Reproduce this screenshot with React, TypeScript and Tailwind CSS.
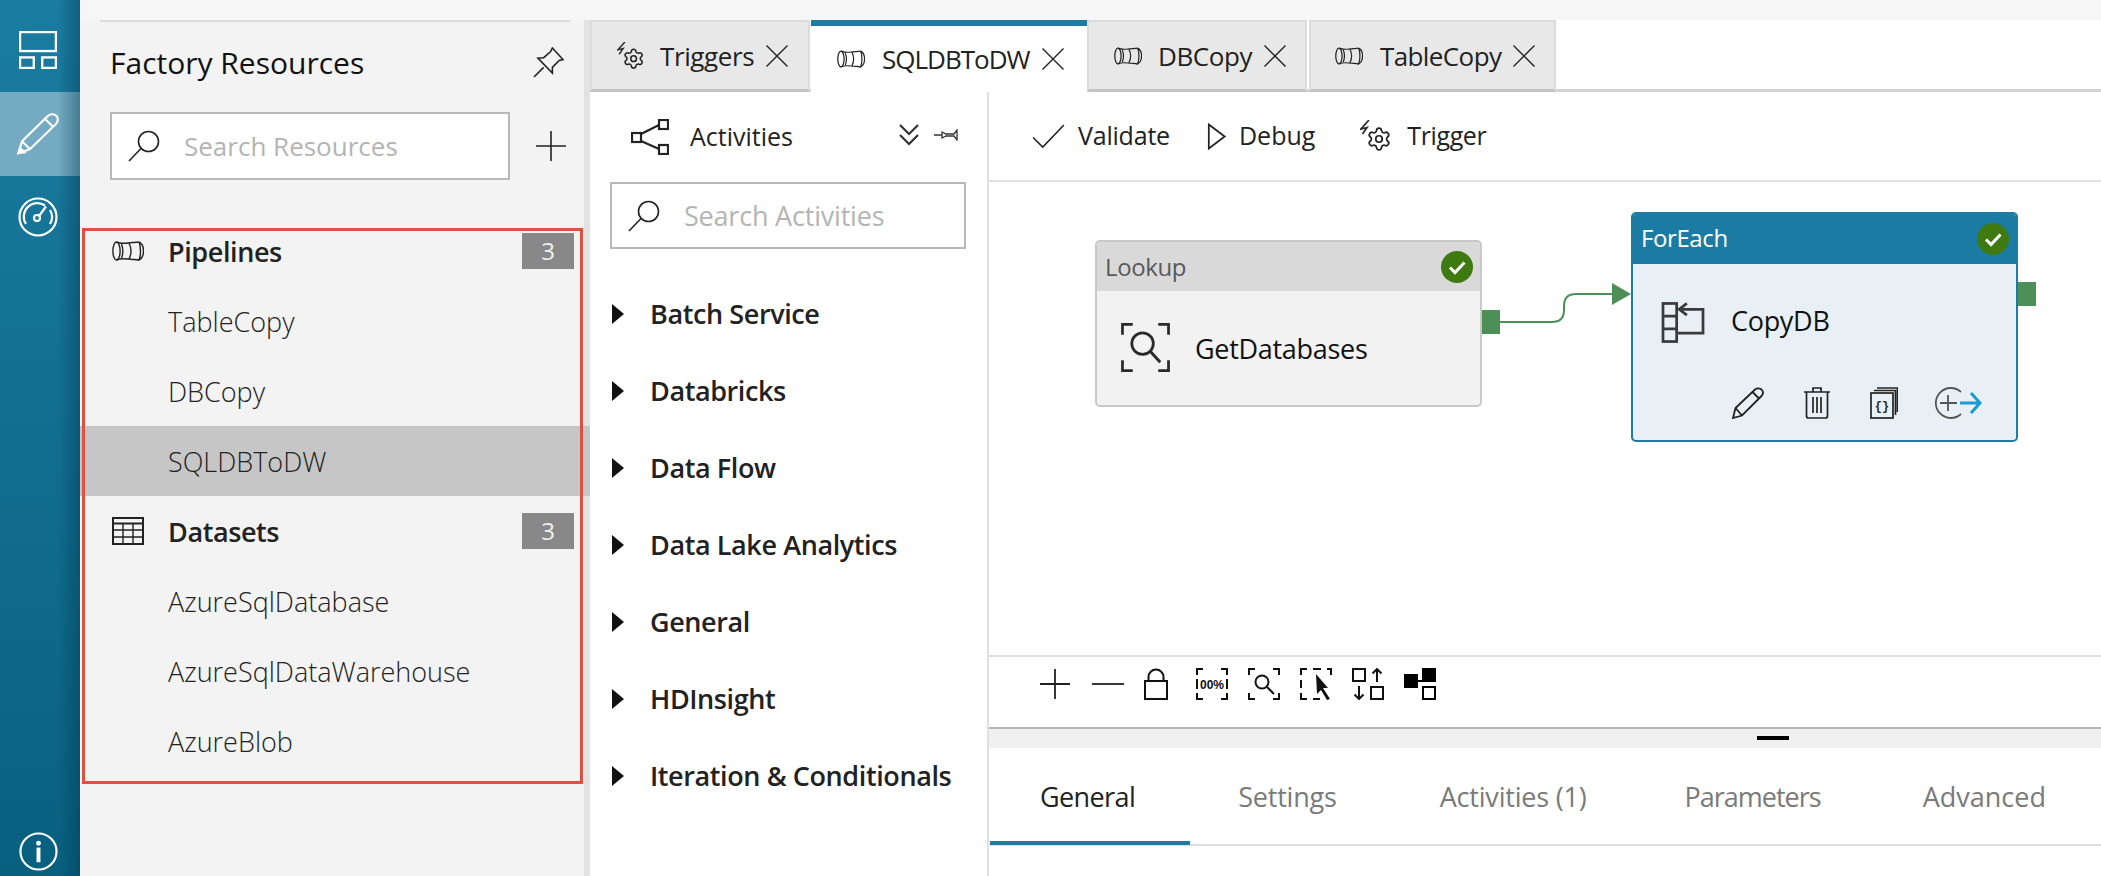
import {Settings} from 'lucide-react';

const PipelineIcon = ({className = ''}: {className?: string}) => (
	<svg viewBox="0 0 32 20" className={className} fill="none" stroke="currentColor" strokeWidth="1.4">
		<ellipse cx="4.5" cy="10" rx="3.6" ry="9" />
		<path d="M4.5 1 C8 2.5 12 2.5 16 2 C20 1.5 24 1.5 27 1" />
		<path d="M4.5 19 C8 17.5 12 17.5 16 18 C20 18.500 24 18.500 27 19" />
		<path d="M9.500 3 C11 7 11 13 9.500 17" />
		<path d="M17 2 C19.500 7 19.500 13 17 18" />
		<path d="M27 1 C33 4 33 16 27 19 C29 14 29 6 27 1" />
	</svg>
);

const SearchIcon = ({className = ''}: {className?: string}) => (
	<svg viewBox="0 0 32 32" className={className} fill="none" stroke="#222" strokeWidth="1.6">
		<circle cx="20.500" cy="11.500" r="10" />
		<path d="M13 18.500 L1 31" />
	</svg>
);

const PinIcon = ({className = ''}: {className?: string}) => (
	<svg viewBox="0 0 32 32" className={className} fill="none" stroke="#222" strokeWidth="1.6" strokeLinejoin="miter">
		<path d="M20 1 L31 13 L27 14 L20 21 L20 27 L5 11.500 L11 11 L18 5 Z" />
		<path d="M11 21 L1 31" />
	</svg>
);

const TriggerIcon = ({className = ''}: {className?: string}) => (
	<svg viewBox="0 0 32 32" className={className} fill="none" stroke="#2a2a2a" strokeWidth="1.700">
		<path d="M9 0 L1 9 L7 7.500 L2.500 14" />
		<Settings x={6} y={6} width={26} height={26} strokeWidth={1.6} />
	</svg>
);

const CloseX = ({className = ''}: {className?: string}) => (
	<svg viewBox="0 0 22 22" className={className} fill="none" stroke="#222" strokeWidth="1.400">
		<path d="M0.500 0.500 L21.500 21.500 M21.500 0.500 L0.500 21.500" />
	</svg>
);

const CheckBadge = ({className = ''}: {className?: string}) => (
	<svg viewBox="0 0 32 32" className={className}>
		<circle cx="16" cy="16" r="16" fill="#3f7a10" />
		<path d="M9 16.500 L14 21.500 L23.500 11.500" fill="none" stroke="#fff" strokeWidth="3" />
	</svg>
);

const Triangle = () => (
	<svg viewBox="0 0 12 20" className="w-[12px] h-[20px] mr-[26px]">
		<path d="M0 0 L12 10 L0 20 Z" fill="#111" />
	</svg>
);

const categories = ['Batch Service','Databricks','Data Flow','Data Lake Analytics','General','HDInsight','Iteration & Conditionals'];

const App = () => {
	return (
		<div className="w-[2101px] h-[876px] flex overflow-hidden bg-white text-[#222] font-['Open_Sans','Noto_Sans',sans-serif]">
			{/* left nav */}
			<div className="relative w-[80px] h-full flex flex-col bg-gradient-to-b from-[#1a7ca1] to-[#08607f]">
				<div className="h-[92px] flex items-center justify-center pr-[5px]">
					<svg viewBox="0 0 36 36" className="w-[38px] h-[38px] mt-[8px]" fill="none" stroke="#fff" strokeWidth="2.200">
						<rect x="1" y="1" width="34" height="18" />
						<rect x="1" y="25" width="13" height="10" />
						<rect x="22" y="25" width="13" height="10" />
					</svg>
				</div>
				<div className="h-[84px] flex items-center justify-center pr-[5px] bg-[#74abc3]">
					<svg viewBox="0 0 42 46" preserveAspectRatio="none" className="w-[42px] h-[42px]" fill="none" stroke="#fff" strokeWidth="2.200">
						<path d="M1.500 44 L5 31 L31 3 C34 0.500 38 1 40 4 C41.500 7 41 9.500 39 12 L13 39.500 Z" />
						<path d="M5 31 L13 39.500 M28 6.500 L36 15" />
						<path d="M1.500 44 L3 38.500 L7.500 43 Z" fill="#fff" />
					</svg>
				</div>
				<div className="h-[82px] flex items-center justify-center pr-[5px]">
					<svg viewBox="0 0 40 40" className="w-[40px] h-[40px]" fill="none" stroke="#fff" strokeWidth="2.200">
						<circle cx="20" cy="20" r="18.500" />
						<path d="M8 27 A13.500 13.500 0 0 1 27 8.500 M32 13 A13.500 13.500 0 0 1 32 27" />
						<circle cx="19" cy="21" r="3" />
						<path d="M21 19 L28 9.500" />
					</svg>
				</div>
				<div className="mt-auto h-[43px] mb-[1px] flex items-start justify-center pr-[4px]">
					<svg viewBox="0 0 40 40" className="w-[39px] h-[39px]" fill="none" stroke="#fff" strokeWidth="2.200">
						<circle cx="20" cy="20" r="18.500" />
						<circle cx="20" cy="11.500" r="2.500" fill="#fff" stroke="none" />
						<rect x="18" y="16" width="4" height="15" fill="#fff" stroke="none" />
					</svg>
				</div>
				<div className="absolute top-0 right-0 w-[22px] h-full bg-gradient-to-r from-transparent to-[#00354d]/40" />
			</div>

			<div className="flex-1 flex flex-col">
				<div className="h-[20px] bg-[#f6f6f6]" />
				<div className="flex-1 flex">
					{/* factory resources */}
					<div className="relative w-[510px] h-[856px] bg-[#f3f3f3] border-r-[6px] border-[#e2e2e2]">
						<div className="h-[2px] ml-[20px] w-[470px] bg-[#dcdcdc]" />
						<div className="h-[80px] flex items-center pl-[30px]">
							<span className="text-[30px] text-[#111]">Factory Resources</span>
							<PinIcon className="ml-auto mr-[20px] w-[31px] h-[31px]" />
						</div>
						<div className="mt-[10px] flex items-center pl-[30px]">
							<div className="w-[400px] h-[68px] bg-white border-2 border-[#b8b8b8] flex items-center pl-[16px]">
								<SearchIcon className="w-[32px] h-[32px]" />
								<span className="ml-[24px] text-[26px] text-[#b4b4b4]">Search Resources</span>
							</div>
							<svg viewBox="0 0 30 30" className="ml-[26px] w-[30px] h-[30px]" stroke="#222" strokeWidth="1.600">
								<path d="M0 15 H30 M15 0 V30" />
							</svg>
						</div>
						<div className="mt-[36px] flex flex-col">
							<div className="h-[70px] flex items-center pl-[32px] pr-[10px]">
								<PipelineIcon className="w-[32px] h-[20px]" />
								<span className="ml-[24px] mt-[2px] text-[27px] font-semibold tracking-[-0.4px]">Pipelines</span>
								<span className="ml-auto w-[52px] h-[36px] bg-[#888888] text-[#f0f0f0] text-[24px] flex items-center justify-center">3</span>
							</div>
							<div className="h-[70px] flex items-center pl-[88px] pt-[2px] text-[27px] font-light text-[#222]">TableCopy</div>
							<div className="h-[70px] flex items-center pl-[88px] pt-[2px] text-[27px] font-light text-[#222]">DBCopy</div>
							<div className="h-[70px] mr-[-6px] flex items-center pl-[88px] pt-[2px] text-[27px] font-light text-[#222] bg-[#c6c6c6]">SQLDBToDW</div>
							<div className="h-[70px] flex items-center pl-[32px] pr-[10px]">
								<svg viewBox="0 0 32 28" className="w-[32px] h-[28px]" fill="none" stroke="#222" strokeWidth="1.400">
									<rect x="1" y="1" width="30" height="26" strokeWidth="2" />
									<path d="M1 6.500 H31" strokeWidth="2" />
									<path d="M1 13 H31 M1 20 H31 M11 6.500 V27 M21 6.500 V27" />
								</svg>
								<span className="ml-[24px] mt-[2px] text-[27px] font-semibold tracking-[-0.4px]">Datasets</span>
								<span className="ml-auto w-[52px] h-[36px] bg-[#888888] text-[#f0f0f0] text-[24px] flex items-center justify-center">3</span>
							</div>
							<div className="h-[70px] flex items-center pl-[88px] pt-[2px] text-[27px] font-light text-[#222]">AzureSqlDatabase</div>
							<div className="h-[70px] flex items-center pl-[88px] pt-[2px] text-[27px] font-light text-[#222]">AzureSqlDataWarehouse</div>
							<div className="h-[70px] flex items-center pl-[88px] pt-[2px] text-[27px] font-light text-[#222]">AzureBlob</div>
						</div>
						<div className="absolute left-[2px] top-[208px] w-[501px] h-[556px] border-[3px] border-[#e04f3f]" />
					</div>

					{/* editor */}
					<div className="flex-1 flex flex-col">
						<div className="h-[72px] flex border-b-[3px] border-[#d4d4d4]">
							<div className="w-[220px] h-[72px] bg-[#e8e8e8] border-2 border-[#dcdcdc] border-b-[3px] border-b-[#c4c4c4] flex items-center pl-[25px] pt-[1px]">
								<TriggerIcon className="w-[28px] h-[28px]" />
								<span className="ml-[15px] text-[26px] tracking-[-0.4px]">Triggers</span>
								<CloseX className="ml-[12px] w-[22px] h-[22px]" />
							</div>
							<div className="ml-[1px] w-[276px] h-[72px] bg-white border-t-[6px] border-[#1f7ba0] flex items-center pl-[26px]">
								<PipelineIcon className="w-[28px] h-[18px]" />
								<span className="ml-[17px] text-[26px] tracking-[-1px]">SQLDBToDW</span>
								<CloseX className="ml-[12px] w-[22px] h-[22px]" />
							</div>
							<div className="w-[220px] h-[72px] bg-[#e8e8e8] border-2 border-[#dcdcdc] border-b-[3px] border-b-[#c4c4c4] flex items-center pl-[25px] pt-[1px]">
								<PipelineIcon className="w-[28px] h-[18px]" />
								<span className="ml-[16px] text-[26px] tracking-[-0.4px]">DBCopy</span>
								<CloseX className="ml-[12px] w-[22px] h-[22px]" />
							</div>
							<div className="ml-[2px] w-[247px] h-[72px] bg-[#e8e8e8] border-2 border-[#dcdcdc] border-b-[3px] border-b-[#c4c4c4] flex items-center pl-[24px] pt-[1px]">
								<PipelineIcon className="w-[28px] h-[18px]" />
								<span className="ml-[17px] text-[26px] tracking-[-0.6px]">TableCopy</span>
								<CloseX className="ml-[12px] w-[22px] h-[22px]" />
							</div>
						</div>

						<div className="flex-1 flex">
							{/* activities */}
							<div className="w-[399px] border-r-2 border-[#e0e0e0]">
								<div className="h-[90px] flex items-center pl-[41px]">
									<svg viewBox="0 0 38 36" className="w-[38px] h-[36px]" fill="none" stroke="#222" strokeWidth="2.200">
										<rect x="1" y="14" width="9" height="9" />
										<rect x="28" y="1" width="9" height="9" />
										<rect x="28" y="26" width="9" height="9" />
										<path d="M10 15 L28 6 M10 22 L28 30" />
									</svg>
									<span className="ml-[21px] text-[25px]">Activities</span>
									<svg viewBox="0 0 20 22" className="ml-[106px] w-[20px] h-[22px] mt-[-4px]" fill="none" stroke="#333" strokeWidth="2.200">
										<path d="M1 1 L10 10 L19 1 M1 11 L10 20 L19 11" />
									</svg>
									<svg viewBox="0 0 24 12" className="ml-[15px] w-[24px] h-[12px] mt-[-4px]" fill="none" stroke="#333" strokeWidth="1.300">
										<path d="M0 6 H8 M8 3 L12 5 H20 L23 1 V11 L20 7 H12 L8 9 Z" />
									</svg>
								</div>
								<div className="ml-[20px] w-[356px] h-[67px] border-2 border-[#b8b8b8] flex items-center pl-[16px]">
									<SearchIcon className="w-[32px] h-[32px]" />
									<span className="ml-[24px] mt-[1px] text-[27px] tracking-[-0.2px] text-[#b4b4b4]">Search Activities</span>
								</div>
								<div className="mt-[26px] flex flex-col">
									{categories.map(name => (
										<div key={name} className="h-[77px] flex items-center pl-[22px]">
											<Triangle />
											<span className="mt-[2px] text-[27px] font-semibold tracking-[-0.4px] whitespace-nowrap">{name}</span>
										</div>
									))}
								</div>
							</div>

							{/* canvas column */}
							<div className="flex-1 flex flex-col">
								<div className="h-[90px] flex items-center border-b-2 border-[#e0e0e0] pl-[43px]">
									<svg viewBox="0 0 34 26" className="w-[33px] h-[25px]" fill="none" stroke="#222" strokeWidth="1.600">
										<path d="M1 14 L11 24 L33 1" />
									</svg>
									<span className="ml-[13px] text-[25px] tracking-[-0.2px]">Validate</span>
									<svg viewBox="0 0 20 28" className="ml-[37px] w-[20px] h-[27px]" fill="none" stroke="#222" strokeWidth="1.800">
										<path d="M1.500 1.500 L18 14 L1.500 26.500 Z" />
									</svg>
									<span className="ml-[12px] text-[25px]">Debug</span>
									<TriggerIcon className="ml-[45px] w-[32px] h-[32px]" />
									<span className="ml-[15px] text-[25px] tracking-[-0.4px]">Trigger</span>
								</div>

								<div className="relative h-[473px]">
									<svg className="absolute left-0 top-0 w-full h-full" fill="none">
										<path d="M511 140 H563 Q575 140 575 128 V124 Q575 112 587 112 H625" stroke="#4d8f57" strokeWidth="2" />
										<path d="M623 101 L642 112 L623 123 Z" fill="#4d8f57" />
									</svg>
									<div className="absolute left-[106px] top-[58px] w-[387px] h-[167px] rounded-[5px] border-2 border-[#c8c8c8] bg-[#f2f2f2] overflow-hidden">
										<div className="h-[49px] bg-[#d9d9d9] flex items-center pl-[8px] pr-[7px]">
											<span className="text-[24px] text-[#5a5a5a] tracking-[-0.4px]">Lookup</span>
											<CheckBadge className="ml-auto w-[32px] h-[32px]" />
										</div>
										<div className="flex items-center pl-[24px] pt-[32px]">
											<svg viewBox="0 0 50 50" className="w-[49px] h-[49px]" fill="none" stroke="#2a2a2a" strokeWidth="2.800">
												<path d="M12 1.500 H1.500 V12 M38 1.500 H48.500 V12 M1.500 38 V48.500 H12 M38 48.500 H48.500 V38" />
												<circle cx="22" cy="21" r="11" />
												<path d="M30 29 L40 40" strokeWidth="3" />
											</svg>
											<span className="ml-[25px] mt-[4px] text-[27px] text-[#111] tracking-[-0.3px]">GetDatabases</span>
										</div>
									</div>
									<div className="absolute left-[493px] top-[128px] w-[18px] h-[24px] bg-[#4d9057]" />

									<div className="absolute left-[642px] top-[30px] w-[387px] h-[230px] rounded-[5px] border-2 border-[#1f7ba0] bg-[#e8f0f5] overflow-hidden">
										<div className="h-[50px] bg-[#1c7ba2] flex items-center pl-[8px] pr-[7px]">
											<span className="text-[24px] text-white tracking-[-0.4px] mt-[-2px]">ForEach</span>
											<CheckBadge className="ml-auto w-[32px] h-[32px]" />
										</div>
										<div className="flex items-center pl-[28px] pt-[38px]">
											<svg viewBox="0 0 44 42" className="w-[44px] h-[41px]" fill="none" stroke="#3a3a3a" strokeWidth="2.800">
												<rect x="1.500" y="1.500" width="14" height="39" />
												<path d="M1.500 14.500 H15.500 M1.500 27.500 H15.500" />
												<path d="M15.500 32 H42.500 V7.500 H20" />
												<path d="M26 1.500 L18 7.500 L26 13.500" />
											</svg>
											<span className="ml-[26px] mt-[-3px] text-[27px] text-[#111] tracking-[-0.3px]">CopyDB</span>
										</div>
										<div className="mt-[44px] flex items-center pl-[99px]">
											<svg viewBox="0 0 32 32" className="w-[32px] h-[32px]" fill="none" stroke="#222" strokeWidth="1.800">
												<path d="M1 31 L3.500 21 L23 2.500 C25 1 28 1 30 3 C31.500 5 31 7.500 29.500 9 L10 28.500 Z" />
												<path d="M3.500 21 L10 28.500 M20.500 5 L27 11.500" />
											</svg>
											<svg viewBox="0 0 26 32" className="ml-[40px] w-[26px] h-[32px]" fill="none" stroke="#222" strokeWidth="1.700">
												<path d="M0 5 H26 M9 5 V1 H17 V5 M2.500 5 V29 Q2.500 31 4.500 31 H21.500 Q23.500 31 23.500 29 V5" />
												<path d="M9 10 V26 M13 10 V26 M17 10 V26" />
											</svg>
											<svg viewBox="0 0 28 32" className="ml-[40px] w-[28px] h-[32px]" fill="none" stroke="#222" strokeWidth="1.700">
												<rect x="1" y="6" width="22" height="25" />
												<path d="M4 3.500 H25.500 V28 M7 1 H27.500 V25" />
												<text x="12" y="23" fontSize="12" fontWeight="700" fill="#222" stroke="none" textAnchor="middle" fontFamily="Liberation Mono">{'{}'}</text>
											</svg>
											<svg viewBox="0 0 50 32" className="ml-[34px] w-[50px] h-[32px]" fill="none" strokeWidth="1.800">
												<path d="M29 27 A15 15 0 1 1 29 5" stroke="#555" />
												<path d="M8 16 H25 M16 8 V24" stroke="#555" />
												<path d="M28 16 H47 M39 6 L48 16 L39 26" stroke="#1a9ad0" strokeWidth="3" />
											</svg>
										</div>
									</div>
									<div className="absolute left-[1029px] top-[100px] w-[18px] h-[24px] bg-[#4d9057]" />
								</div>

								<div className="h-[72px] border-t-2 border-[#dedede] flex items-center pl-[51px] pb-[16px]">
									<svg viewBox="0 0 30 30" className="w-[30px] h-[30px]" stroke="#222" strokeWidth="1.800"><path d="M0 15 H30 M15 0 V30" /></svg>
									<svg viewBox="0 0 32 30" className="ml-[22px] w-[32px] h-[30px]" stroke="#222" strokeWidth="1.800"><path d="M0 15 H32" /></svg>
									<svg viewBox="0 0 24 32" className="ml-[20px] w-[24px] h-[32px]" fill="none" stroke="#111" strokeWidth="2"><rect x="1" y="13" width="22" height="18" /><path d="M4.500 13 V9 A7.500 7.500 0 0 1 19.500 9 V13" /></svg>
									<svg viewBox="0 0 32 32" className="ml-[28px] w-[32px] h-[32px]" fill="none" stroke="#111" strokeWidth="2">
										<path d="M7 1 H1 V7 M25 1 H31 V7 M1 25 V31 H7 M25 31 H31 V25 M1 11 V21 M31 11 V21" />
										<text x="16" y="20.500" fontSize="12" fontWeight="700" fill="#111" stroke="none" textAnchor="middle" fontFamily="Liberation Sans">00%</text>
									</svg>
									<svg viewBox="0 0 32 32" className="ml-[20px] w-[32px] h-[32px]" fill="none" stroke="#111" strokeWidth="2">
										<path d="M7 1 H1 V7 M25 1 H31 V7 M1 25 V31 H7 M25 31 H31 V25" />
										<circle cx="14" cy="14" r="6.500" />
										<path d="M19 19 L26 26" />
									</svg>
									<svg viewBox="0 0 32 32" className="ml-[20px] w-[32px] h-[32px]" fill="none" stroke="#111" strokeWidth="2">
										<path d="M7 1 H1 V7 M13 1 H21 M27 1 H31 V7 M1 12 V20 M1 25 V31 H7 M13 31 H20" />
										<path d="M16 6 L28 20 L23 20 L30 31 L27 32 L21 22 L17 26 Z" fill="#111" stroke="none" />
									</svg>
									<svg viewBox="0 0 32 32" className="ml-[20px] w-[32px] h-[32px]" fill="none" stroke="#111" strokeWidth="2">
										<rect x="1" y="1" width="12" height="12" />
										<rect x="19" y="19" width="12" height="12" />
										<path d="M25 14 V1 M20.500 5.500 L25 1 L29.500 5.500 M7 18 V31 M2.500 26.500 L7 31 L11.500 26.500" />
									</svg>
									<svg viewBox="0 0 32 32" className="ml-[20px] w-[32px] h-[32px]" fill="#000" stroke="#000" strokeWidth="2">
										<rect x="1" y="7" width="12" height="12" />
										<rect x="19" y="1" width="12" height="12" />
										<rect x="19" y="19" width="12" height="12" fill="none" />
										<path d="M13 13 H19" />
									</svg>
								</div>
								<div className="h-[21px] border-t-2 border-[#b5b5b5] bg-[#f0f0f0] flex items-start pl-[768px] pt-[7px]">
									<div className="w-[32px] h-[4px] bg-black" />
								</div>
								<div className="relative h-[98px] border-b-2 border-[#dedede] flex items-center pl-[51px] pt-[3px] text-[27px] tracking-[-0.2px] text-[#7a7a7a]">
									<span className="text-[#222] tracking-[-0.6px]">General</span>
									<span className="ml-[103px]">Settings</span>
									<span className="ml-[103px]">Activities (1)</span>
									<span className="ml-[98px] tracking-[-1px]">Parameters</span>
									<span className="ml-[102px] tracking-[0px]">Advanced</span>
									<div className="absolute left-[1px] bottom-[-1px] w-[200px] h-[4px] bg-[#1f7ba0]" />
								</div>
							</div>
						</div>
					</div>
				</div>
			</div>
		</div>
	);
};

export default App;
